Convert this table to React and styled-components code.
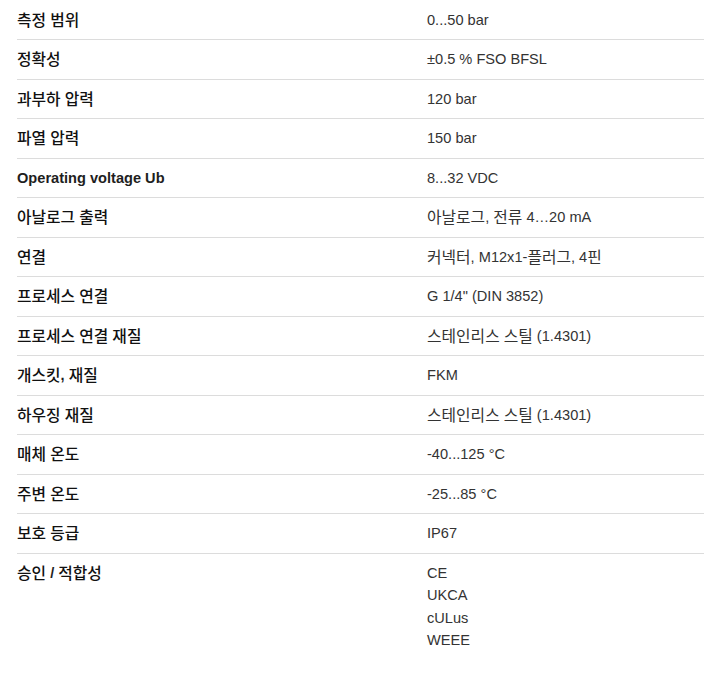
import React from 'react'
import styled, { createGlobalStyle } from 'styled-components'

const GlobalStyle = createGlobalStyle`
  body {
    margin: 0;
    background: #fff;
    font-family: "Liberation Sans", "Noto Sans CJK KR", Arial, sans-serif;
  }
`

// hangul renders a touch larger than the latin text in the original
const Hangul = styled.span`
  font-family: "Noto Sans CJK KR", sans-serif;
  font-size: 15.8px;
  line-height: 0;
  vertical-align: -0.5px;
`

const Table = styled.div`
  padding: 0.5px 0 0 17px;
`

const Row = styled.div`
  display: grid;
  grid-template-columns: 410px 1fr;
  padding: 10px 0;
  border-bottom: ${p => (p.last ? 'none' : '1px solid #dcdcdc')};
  font-size: 14.6px;
  line-height: 18.5px;
`

const Label = styled.div`
  font-weight: 700;
  color: #1e1e1e;

  ${Hangul} {
    font-weight: 500;
    color: #111;
  }
`

const Value = styled.div`
  color: #333;
`

const ValueList = styled.ul`
  list-style: none;
  margin: -2px 0 0;
  padding: 0;
  color: #333;
  line-height: 22.5px;
`

const Text = ({ children }) =>
  children.split(/([\uac00-\ud7a3]+)/).map((part, i) =>
    i % 2 ? <Hangul key={i}>{part}</Hangul> : part
  )

const specs = [
  ['측정 범위', '0...50 bar'],
  ['정확성', '±0.5 % FSO BFSL'],
  ['과부하 압력', '120 bar'],
  ['파열 압력', '150 bar'],
  ['Operating voltage Ub', '8...32 VDC'],
  ['아날로그 출력', '아날로그, 전류 4…20 mA'],
  ['연결', '커넥터, M12x1-플러그, 4핀'],
  ['프로세스 연결', 'G 1/4" (DIN 3852)'],
  ['프로세스 연결 재질', '스테인리스 스틸 (1.4301)'],
  ['개스킷, 재질', 'FKM'],
  ['하우징 재질', '스테인리스 스틸 (1.4301)'],
  ['매체 온도', '-40...125 °C'],
  ['주변 온도', '-25...85 °C'],
  ['보호 등급', 'IP67'],
]

const approvals = ['CE', 'UKCA', 'cULus', 'WEEE']

export default function App () {
  return (
    <>
      <GlobalStyle />
      <Table>
        {specs.map(([label, value]) => (
          <Row key={label}>
            <Label><Text>{label}</Text></Label>
            <Value><Text>{value}</Text></Value>
          </Row>
        ))}
        <Row last>
          <Label><Text>승인 / 적합성</Text></Label>
          <ValueList>
            {approvals.map(a => <li key={a}>{a}</li>)}
          </ValueList>
        </Row>
      </Table>
    </>
  )
}
